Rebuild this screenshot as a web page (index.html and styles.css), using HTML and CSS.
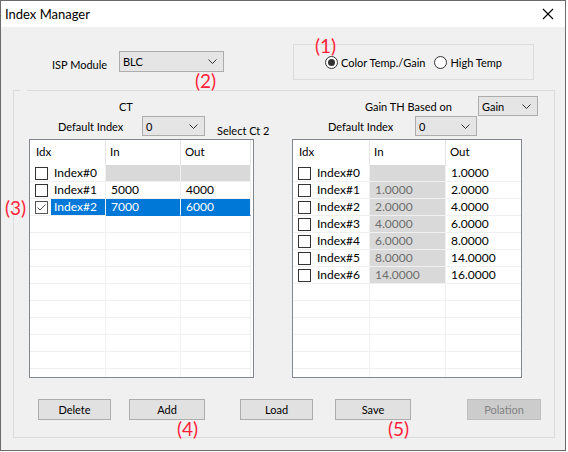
FILE: index.html
```html
<!DOCTYPE html>
<html>
<head>
<meta charset="utf-8">
<title>Index Manager</title>
<link rel="stylesheet" href="styles.css">
</head>
<body>
<div class="win">
  <div class="titlebar">
    <span class="title">Index Manager</span>
    <svg class="close" width="12" height="12" viewBox="0 0 12 12"><path d="M1 1 L11 11 M11 1 L1 11" stroke="#000" stroke-width="1.1" fill="none"/></svg>
  </div>
  <div class="body">
    <div class="toprow">
      <span class="lbl isp-lbl">ISP Module</span>
      <div class="combo isp-combo"><span>BLC</span><svg class="chev" width="9" height="5" viewBox="0 0 9 5"><path d="M0.5 0.5 L4.5 4.5 L8.5 0.5" stroke="#333" fill="none"/></svg></div>
      <div class="radiobox">
        <span class="radio on"><span class="dot"></span>Color Temp./Gain</span>
        <span class="radio"><span class="dot"></span>High Temp</span>
      </div>
    </div>

    <div class="group">
      <div class="cols">
        <div class="col col-left">
          <div class="hrow">
            <span class="lbl ct-lbl">CT</span>
          </div>
          <div class="hrow">
            <span class="lbl di-left">Default Index</span>
            <div class="combo c-left"><span>0</span><svg class="chev" width="9" height="5" viewBox="0 0 9 5"><path d="M0.5 0.5 L4.5 4.5 L8.5 0.5" stroke="#333" fill="none"/></svg></div>
            <span class="lbl selct">Select Ct 2</span>
          </div>
          <div class="list list-left">
            <div class="lrow head"><div class="c">Idx</div><div class="c">In</div><div class="c">Out</div><div class="c"></div></div>
            <div class="lrow"><div class="c idx"><span class="cb"></span><span class="t">Index#0</span></div><div class="c gray"></div><div class="c gray"></div><div class="c"></div></div>
            <div class="lrow"><div class="c idx"><span class="cb"></span><span class="t">Index#1</span></div><div class="c">5000</div><div class="c">4000</div><div class="c"></div></div>
            <div class="lrow sel"><div class="c idx"><span class="cb checked"><svg width="11" height="11" viewBox="0 0 11 11"><path d="M1.5 5.5 L4 8 L9.5 2.5" stroke="#555" stroke-width="1" fill="none"/></svg></span><span class="t">Index#2</span></div><div class="c">7000</div><div class="c">6000</div><div class="c"></div></div>
            <div class="lrow"><div class="c"></div><div class="c"></div><div class="c"></div><div class="c"></div></div>
            <div class="lrow"><div class="c"></div><div class="c"></div><div class="c"></div><div class="c"></div></div>
            <div class="lrow"><div class="c"></div><div class="c"></div><div class="c"></div><div class="c"></div></div>
            <div class="lrow"><div class="c"></div><div class="c"></div><div class="c"></div><div class="c"></div></div>
            <div class="lrow"><div class="c"></div><div class="c"></div><div class="c"></div><div class="c"></div></div>
            <div class="lrow"><div class="c"></div><div class="c"></div><div class="c"></div><div class="c"></div></div>
            <div class="lrow"><div class="c"></div><div class="c"></div><div class="c"></div><div class="c"></div></div>
            <div class="lrow"><div class="c"></div><div class="c"></div><div class="c"></div><div class="c"></div></div>
            <div class="lrow"><div class="c"></div><div class="c"></div><div class="c"></div><div class="c"></div></div>
            <div class="lrow"><div class="c"></div><div class="c"></div><div class="c"></div><div class="c"></div></div>
          </div>
        </div>

        <div class="col col-right">
          <div class="hrow">
            <span class="lbl gain-lbl">Gain TH Based on</span>
            <div class="combo c-gain"><span>Gain</span><svg class="chev" width="9" height="5" viewBox="0 0 9 5"><path d="M0.5 0.5 L4.5 4.5 L8.5 0.5" stroke="#333" fill="none"/></svg></div>
          </div>
          <div class="hrow">
            <span class="lbl di-right">Default Index</span>
            <div class="combo c-right"><span>0</span><svg class="chev" width="9" height="5" viewBox="0 0 9 5"><path d="M0.5 0.5 L4.5 4.5 L8.5 0.5" stroke="#333" fill="none"/></svg></div>
          </div>
          <div class="list list-right">
            <div class="lrow head"><div class="c">Idx</div><div class="c">In</div><div class="c">Out</div></div>
            <div class="lrow"><div class="c idx"><span class="cb"></span><span class="t">Index#0</span></div><div class="c gray"></div><div class="c">1.0000</div></div>
            <div class="lrow"><div class="c idx"><span class="cb"></span><span class="t">Index#1</span></div><div class="c gray">1.0000</div><div class="c">2.0000</div></div>
            <div class="lrow"><div class="c idx"><span class="cb"></span><span class="t">Index#2</span></div><div class="c gray">2.0000</div><div class="c">4.0000</div></div>
            <div class="lrow"><div class="c idx"><span class="cb"></span><span class="t">Index#3</span></div><div class="c gray">4.0000</div><div class="c">6.0000</div></div>
            <div class="lrow"><div class="c idx"><span class="cb"></span><span class="t">Index#4</span></div><div class="c gray">6.0000</div><div class="c">8.0000</div></div>
            <div class="lrow"><div class="c idx"><span class="cb"></span><span class="t">Index#5</span></div><div class="c gray">8.0000</div><div class="c">14.0000</div></div>
            <div class="lrow"><div class="c idx"><span class="cb"></span><span class="t">Index#6</span></div><div class="c gray">14.0000</div><div class="c">16.0000</div></div>
            <div class="lrow"><div class="c"></div><div class="c"></div><div class="c"></div></div>
            <div class="lrow"><div class="c"></div><div class="c"></div><div class="c"></div></div>
            <div class="lrow"><div class="c"></div><div class="c"></div><div class="c"></div></div>
            <div class="lrow"><div class="c"></div><div class="c"></div><div class="c"></div></div>
            <div class="lrow"><div class="c"></div><div class="c"></div><div class="c"></div></div>
            <div class="lrow"><div class="c"></div><div class="c"></div><div class="c"></div></div>
          </div>
        </div>
      </div>

      <div class="buttons">
        <button class="btn b-delete">Delete</button>
        <button class="btn b-add">Add</button>
        <button class="btn b-load">Load</button>
        <button class="btn b-save">Save</button>
        <button class="btn b-pol" disabled>Polation</button>
      </div>
    </div>

    <span class="note n1">(1)</span>
    <span class="note n2">(2)</span>
    <span class="note n3">(3)</span>
    <span class="note n4">(4)</span>
    <span class="note n5">(5)</span>
  </div>
</div>
</body>
</html>
```
FILE: styles.css
```css
html, body {
  margin: 0;
  padding: 0;
  background: #ffffff;
}

body {
  font-family: Lato, "Liberation Sans", sans-serif;
  font-size: 11px;
  color: #000;
}

.win {
  position: relative;
  width: 566px;
  height: 451px;
  box-sizing: border-box;
  border: 1px solid #6b6b6b;
  background: #f0f0f0;
  display: flex;
  flex-direction: column;
}

.titlebar {
  height: 26px;
  background: #ffffff;
  display: flex;
  align-items: center;
  justify-content: space-between;
  padding: 0 11px 0 4px;
  flex: none;
}

.title {
  font-size: 13px;
}

.close {
  display: block;
}

.body {
  flex: 1;
  background: #f0f0f0;
}

.lbl {
  display: inline-block;
  white-space: nowrap;
  flex: none;
}

/* top row */
.toprow {
  height: 63px;
  box-sizing: border-box;
  padding-top: 17px;
  display: flex;
  align-items: flex-start;
}

.isp-lbl {
  margin-left: 51px;
  width: 67px;
  margin-top: 14px;
}

.combo {
  box-sizing: border-box;
  height: 20px;
  background: #e5e5e5;
  border: 1px solid #adadad;
  display: flex;
  align-items: center;
  justify-content: space-between;
  padding: 0 6px 0 3px;
  flex: none;
}

.chev {
  display: block;
}

.isp-combo {
  width: 105px;
  height: 21px;
  margin-top: 7px;
}

.radiobox {
  margin-left: 69px;
  width: 241px;
  height: 36px;
  box-sizing: border-box;
  border: 1px solid #dcdcdc;
  display: flex;
  align-items: center;
  padding-left: 31px;
  flex: none;
}

.radio {
  display: flex;
  align-items: center;
  white-space: nowrap;
}

.radio + .radio {
  margin-left: 9px;
}

.dot {
  width: 13px;
  height: 13px;
  box-sizing: border-box;
  border: 1px solid #333333;
  border-radius: 50%;
  background: #ffffff;
  margin-right: 3px;
  position: relative;
  flex: none;
}

.radio.on .dot::after {
  content: "";
  position: absolute;
  left: 2px;
  top: 2px;
  width: 7px;
  height: 7px;
  border-radius: 50%;
  background: #333333;
}

/* group box */
.group {
  position: relative;
  margin-left: 12px;
  width: 542px;
  height: 348px;
  box-sizing: border-box;
  border: 1px solid #dcdcdc;
}

.group::before {
  content: "";
  position: absolute;
  top: -1px;
  left: 6px;
  width: 7px;
  height: 1px;
  background: #f0f0f0;
}

.cols {
  display: flex;
  padding-top: 5px;
}

.col {
  display: flex;
  flex-direction: column;
  flex: none;
}

.col-left {
  margin-left: 15px;
  width: 225px;
}

.col-right {
  margin-left: 38px;
  width: 230px;
}

.hrow {
  height: 20px;
  display: flex;
  align-items: center;
}

.ct-lbl {
  margin-left: 90px;
}

.di-left {
  margin-left: 29px;
  width: 84px;
}

.c-left {
  width: 63px;
}

.selct {
  margin-left: 12px;
  margin-top: 9px;
}

.gain-lbl {
  margin-left: 73px;
  width: 113px;
}

.c-gain {
  width: 60px;
}

.di-right {
  margin-left: 36px;
  width: 87px;
}

.c-right {
  width: 62px;
}

/* list views */
.list {
  margin-top: 3px;
  height: 239px;
  box-sizing: border-box;
  border: 1px solid #828790;
  background: #ffffff;
  overflow: hidden;
  font-size: 12px;
}

.lrow {
  display: grid;
  height: 17px;
  box-sizing: border-box;
}

.list-left .lrow {
  grid-template-columns: 76px 75px 70px 2px;
}

.list-right .lrow {
  grid-template-columns: 77px 76px 75px;
}

.lrow .c {
  box-sizing: border-box;
  border-right: 1px solid #f0f0f0;
  border-bottom: 1px solid #f0f0f0;
  padding-left: 5px;
  line-height: 16px;
  white-space: nowrap;
  overflow: hidden;
}

.lrow .c:last-child {
  border-right: none;
}

.list-left .lrow .c:nth-child(4) {
  border-bottom: none;
}

.lrow.head {
  height: 25px;
}

.lrow.head .c {
  border-bottom: none;
  border-right: 1px solid #e5e5e5;
  line-height: 24px;
  padding-left: 4px;
  font-size: 11.5px;
}

.lrow.head .c:first-child {
  padding-left: 6px;
}

.list-right .lrow.head .c:last-child {
  border-right: none;
}

.lrow .c.gray {
  background: #d9d9d9;
  color: #6d6d6d;
}

.lrow .c.idx {
  display: flex;
  align-items: center;
  padding-left: 5px;
}

.cb {
  width: 13px;
  height: 13px;
  box-sizing: border-box;
  border: 1px solid #333333;
  background: #ffffff;
  flex: none;
  display: flex;
  align-items: center;
  justify-content: center;
}

.cb svg {
  display: block;
}

.cb.checked {
  border-color: #555555;
}

.t {
  margin-left: 5px;
  padding-left: 1px;
  height: 16px;
  line-height: 16px;
  flex: 1;
}

.lrow.sel .c {
  background: #0078d7;
  color: #ffffff;
  border-bottom-color: #0078d7;
}

.lrow.sel .c.idx {
  background: #ffffff;
  border-bottom-color: #f0f0f0;
}

.lrow.sel .t {
  background: #0078d7;
  color: #ffffff;
  margin-left: 3px;
  padding-left: 3px;
}

.lrow.sel .c:last-child {
  background: #ffffff;
}

/* buttons */
.buttons {
  display: flex;
  margin-top: 21px;
}

.btn {
  height: 21px;
  box-sizing: border-box;
  border: 1px solid #adadad;
  background: #e1e1e1;
  font-family: Lato, "Liberation Sans", sans-serif;
  font-size: 11px;
  color: #000;
  padding: 0;
  border-radius: 0;
  flex: none;
}

.b-delete { margin-left: 24px; width: 73px; }
.b-add { margin-left: 18px; width: 76px; }
.b-load { margin-left: 35px; width: 73px; }
.b-save { margin-left: 22px; width: 76px; }
.b-pol {
  margin-left: 56px;
  width: 74px;
  background: #cccccc;
  border-color: #bfbfbf;
  color: #838383;
}

/* red annotations */
.note {
  position: absolute;
  color: #ff1f3a;
  font-family: Lato, "Liberation Sans", sans-serif;
  font-size: 19px;
  line-height: 20px;
}

.n1 { left: 314px; top: 35px; }
.n2 { left: 194px; top: 70px; }
.n3 { left: 4px; top: 197px; }
.n4 { left: 176px; top: 418px; }
.n5 { left: 387px; top: 418px; }
```
